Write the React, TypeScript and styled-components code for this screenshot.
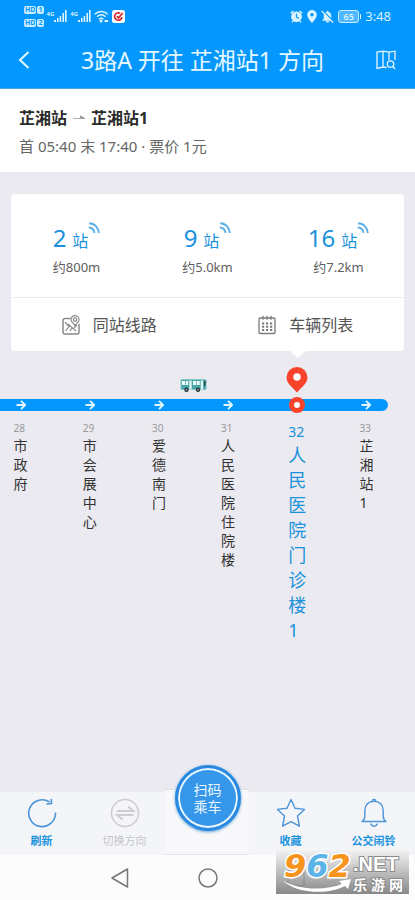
import React from "react";
import styled, { createGlobalStyle } from "styled-components";

const BLUE = "#0497fd";
const LINK = "#1a92dc";

const GlobalStyle = createGlobalStyle`
  *, *::before, *::after { box-sizing: border-box; }
  body {
    margin: 0;
    background: #ebeaf0;
    font-family: "Noto Sans", "Noto Sans CJK SC", sans-serif;
  }
  button {
    font: inherit;
    color: inherit;
    background: none;
    border: 0;
    padding: 0;
    cursor: pointer;
  }
  h1, h2, p, ol, ul { margin: 0; padding: 0; font-weight: 400; }
  ol, ul { list-style: none; }
  svg { display: block; flex: none; }
`;

const Page = styled.div`
  position: relative;
  min-height: 100vh;
  display: flex;
  flex-direction: column;
`;

/* ---------- status bar and title ---------- */

const StatusBar = styled.div`
  height: 32px;
  display: flex;
  align-items: center;
  justify-content: space-between;
  padding: 0 24px;
  background: ${BLUE};
  color: #d9f3ff;
`;

const StatusGroup = styled.div<{ $gap: number }>`
  display: flex;
  align-items: center;
  gap: ${(p) => p.$gap}px;
`;

const SimStack = styled.div`
  display: grid;
  gap: 5px;
`;

const SimRow = styled.div`
  display: flex;
  gap: 1px;
`;

const SimTag = styled.span`
  height: 8px;
  padding: 0 1px;
  border-radius: 2px;
  background: #c9edff;
  color: ${BLUE};
  font-size: 7px;
  line-height: 8px;
  font-weight: 700;
`;

const Signal = styled.div`
  display: flex;
  align-items: flex-start;
`;

const SignalText = styled.span`
  font-size: 6px;
  line-height: 8px;
  font-weight: 700;
`;

const Battery = styled.div`
  display: flex;
  align-items: center;
  gap: 1px;
  &::after {
    content: "";
    width: 1px;
    height: 5px;
    background: #d9f3ff;
  }
`;

const BatteryBody = styled.span`
  width: 21px;
  height: 13px;
  border: 1px solid #c9edff;
  border-radius: 3px;
  background: #4fb7ff;
  font-size: 9px;
  line-height: 11px;
  font-weight: 600;
  text-align: center;
`;

const Clock = styled.span`
  font-size: 13px;
  line-height: 16px;
`;

const Header = styled.header`
  height: 57px;
  display: grid;
  grid-template-columns: 48px 1fr 58px;
  align-items: center;
  background: ${BLUE};
  border-bottom: 1px solid #4a9fdc;
  color: #e6f7ff;
`;

const Title = styled.h1`
  font-size: 23px;
  line-height: 32px;
  text-align: center;
  white-space: nowrap;
`;

const IconButton = styled.button`
  height: 48px;
  display: flex;
  align-items: center;
  justify-content: center;
`;

/* ---------- route summary ---------- */

const Summary = styled.section`
  padding: 17px 19px 14px;
  background: #fff;
`;

const Route = styled.h2`
  display: flex;
  align-items: center;
  gap: 6px;
  font-size: 16px;
  line-height: 24px;
  font-weight: 700;
  color: #2b2b2b;
`;

const Schedule = styled.p`
  margin-top: 4px;
  font-size: 15px;
  line-height: 24px;
  color: #666;
`;

/* ---------- arrivals card ---------- */

const Main = styled.main`
  flex: 1;
  padding-top: 22px;
`;

const Card = styled.section`
  position: relative;
  margin: 0 11px;
  border-radius: 4px;
  background: #fff;
  &::after {
    content: "";
    position: absolute;
    top: 100%;
    right: 98px;
    border: 8px solid transparent;
    border-top: 7px solid #fff;
    border-bottom: 0;
  }
`;

const Arrivals = styled.div`
  display: grid;
  grid-template-columns: repeat(3, 1fr);
  padding: 28px 0 20px;
  border-bottom: 1px solid #ececf0;
`;

const Arrival = styled.div`
  display: grid;
  justify-items: center;
`;

const StopsAway = styled.div`
  display: flex;
  align-items: baseline;
  color: ${LINK};
  font-size: 16px;
  line-height: 32px;
  svg { align-self: flex-start; }
`;

const StopCount = styled.span`
  margin-right: 6px;
  font-size: 24px;
`;

const Distance = styled.span`
  font-size: 13px;
  line-height: 20px;
  color: #606060;
`;

const CardActions = styled.div`
  display: grid;
  grid-template-columns: repeat(2, 1fr);
`;

const CardAction = styled.button`
  height: 53px;
  display: flex;
  align-items: center;
  justify-content: center;
  gap: 13px;
  font-size: 16px;
  line-height: 24px;
  color: #555;
`;

/* ---------- line diagram ---------- */

const Line = styled.section`
  padding-top: 14px;
`;

const Markers = styled.div`
  display: grid;
  grid-template-columns: repeat(6, 1fr);
  margin: 0 14px 0 -14px;
  height: 34px;
  padding: 2px 0 6px;
  justify-items: center;
`;

const BusSlot = styled.div`
  grid-column: 3 / 5;
  align-self: end;
`;

const PinSlot = styled.div`
  grid-column: 5;
  align-self: start;
`;

const Track = styled.div`
  margin-right: 27px;
  height: 12px;
  border-radius: 0 6px 6px 0;
  background: ${BLUE};
`;

const TrackStops = styled.div`
  display: grid;
  grid-template-columns: repeat(6, 1fr);
  grid-template-rows: 12px;
  margin: 0 -13px 0 -14px;
  align-items: center;
  justify-items: center;
`;

const CurrentDot = styled.span`
  width: 16px;
  height: 16px;
  border: 5px solid #f9432a;
  border-radius: 50%;
  background: #fff;
`;

const StopList = styled.ol`
  display: grid;
  grid-template-columns: repeat(6, 1fr);
  margin: 10px 14px 0 -14px;
`;

const Stop = styled.li<{ $current?: boolean }>`
  width: ${(p) => (p.$current ? 18 : 14)}px;
  justify-self: center;
  color: ${(p) => (p.$current ? LINK : "#333")};
  font-size: ${(p) => (p.$current ? 18 : 14)}px;
  line-height: ${(p) => (p.$current ? 25 : 19)}px;
  word-break: break-all;
`;

const StopNumber = styled.span<{ $current?: boolean }>`
  display: block;
  font-size: ${(p) => (p.$current ? 14 : 10)}px;
  line-height: ${(p) => (p.$current ? 22 : 15)}px;
  color: ${(p) => (p.$current ? LINK : "#999")};
  word-break: normal;
`;

/* ---------- tab bar ---------- */

const TabBar = styled.nav`
  display: grid;
  grid-template-columns: repeat(5, 1fr);
  height: 63px;
  background: #f4f5f8;
`;

const Tab = styled.button<{ $disabled?: boolean }>`
  display: flex;
  flex-direction: column;
  align-items: center;
  padding-top: 6px;
  gap: 4px;
  font-size: 11px;
  line-height: 18px;
  font-weight: ${(p) => (p.$disabled ? 400 : 600)};
  color: ${(p) => (p.$disabled ? "#c6c6c9" : LINK)};
`;

const ScanCell = styled.div`
  display: flex;
  justify-content: center;
  align-items: flex-start;
  margin-top: -3px;
  background: #f8f8fa;
  border-top: 1px solid #dfdfe4;
  border-bottom: 1px solid #e4e4ea;
`;

const ScanButton = styled.button`
  width: 66px;
  height: 66px;
  flex: none;
  margin-top: -25px;
  border-radius: 50%;
  background: #3596ea;
  border: 3px solid #2b8adf;
  box-shadow: inset 0 0 0 2px #e9f7ff, 0 1px 3px #5b9fda;
  color: #e9f6ff;
  font-size: 14px;
  line-height: 17px;
`;

const SystemNav = styled.nav`
  height: 45px;
  display: grid;
  grid-template-columns: 1fr 88px 88px 88px 1fr;
  background: #fcfcfd;
`;

const SystemButton = styled.button<{ $column: number }>`
  grid-column: ${(p) => p.$column};
  display: flex;
  align-items: center;
  justify-content: center;
`;

/* ---------- site badge ---------- */

const SiteBadge = styled.div`
  position: absolute;
  right: 6px;
  bottom: 6px;
  width: 133px;
  height: 44px;
  display: flex;
  background: linear-gradient(rgba(240, 240, 240, 0.6), rgba(130, 130, 130, 0.95));
  color: #fff;
`;

const BadgeNumber = styled.div`
  position: relative;
  width: 77px;
  padding-left: 8px;
  font: italic 700 32px/32px "DejaVu Sans", sans-serif;
  -webkit-text-stroke: 3px #fff;
  paint-order: stroke fill;
  svg { position: absolute; left: 6px; bottom: 1px; }
`;

const Digit = styled.span<{ $color: string }>`
  position: relative;
  color: ${(p) => p.$color};
`;

const BadgeText = styled.div`
  padding-top: 3px;
  -webkit-text-stroke: 2px #8a8a8a;
  paint-order: stroke fill;
  white-space: nowrap;
`;

const BadgeDomain = styled.div`
  font: 700 20px/22px "Liberation Sans", sans-serif;
`;

const BadgeName = styled.div`
  font: 700 14px/19px "Noto Sans CJK SC", sans-serif;
  display: flex;
  gap: 4px;
`;

/* ---------- icons ---------- */

const SignalBars = () => (
  <svg width="13" height="13" viewBox="0 0 13 13" fill="#d9f3ff">
    <rect x="0" y="10" width="2" height="2" />
    <rect x="3" y="8" width="1.6" height="4" />
    <rect x="5.6" y="6" width="1.6" height="6" />
    <rect x="8.4" y="3" width="1.6" height="9" />
    <rect x="11" y="0" width="1.6" height="12" />
  </svg>
);

const WifiIcon = () => (
  <svg width="15" height="13" viewBox="0 0 15 13" fill="none" stroke="#d9f3ff" strokeWidth="1.5">
    <path d="M.8 4.3C4.5.4 10 .4 13.7 4.3M3 6.8c2.5-2.6 6-2.6 8.5 0M5 9.2c1.4-1.4 3.2-1.4 4.4 0" />
    <circle cx="7" cy="11" r=".8" fill="#d9f3ff" />
    <path d="M10.5 11H14" strokeWidth="2" />
  </svg>
);

const AppIcon = () => (
  <svg width="13" height="13" viewBox="0 0 13 13">
    <rect width="13" height="13" rx="2.5" fill="#fff" />
    <path d="M8.2 3.3a3.7 3.7 0 1 0 1.8 4M5 6.2l1.5 1.7L10.7 3" fill="none" stroke="#d92b2b" strokeWidth="1.7" />
  </svg>
);

const AlarmIcon = () => (
  <svg width="13" height="13" viewBox="0 0 13 13" stroke="#d9f3ff" fill="none">
    <circle cx="6.5" cy="6.8" r="4.9" fill="#d9f3ff" />
    <path d="M.8 3.5 3.3 1M12.2 3.5 9.7 1M3 11l-1 1.3M10 11l1 1.3" strokeWidth="1.6" />
    <path d="M6.5 3.8v3.4l2.3 1.2" stroke={BLUE} strokeWidth="1.2" />
  </svg>
);

const PlaceIcon = () => (
  <svg width="10" height="13" viewBox="0 0 10 13">
    <path d="M5 0a4.8 4.8 0 0 0-4.8 4.8C.2 8.2 5 13 5 13s4.8-4.8 4.8-8.2A4.8 4.8 0 0 0 5 0Z" fill="#d9f3ff" />
    <circle cx="5" cy="4.8" r="1.7" fill={BLUE} />
  </svg>
);

const MutedIcon = () => (
  <svg width="13" height="13" viewBox="0 0 13 13">
    <path d="M6.500.5v1C9 2 10 4 10 6v2.500l1.500 2H1.500l1.500-2V6c0-2 1-4 3.500-4.500M5 11.300h3c0 1.500-3 1.500-3 0" fill="#d9f3ff" stroke="#d9f3ff" strokeWidth=".5" />
    <path d="M1.500.5 13 12" stroke={BLUE} strokeWidth="1.400" />
    <path d="M.6 1 12 12.500" stroke="#d9f3ff" strokeWidth="1.200" />
  </svg>
);

const BackIcon = () => (
  <svg width="12" height="18" viewBox="0 0 12 18" fill="none" stroke="currentColor" strokeWidth="2">
    <path d="M10.500 1 2 9l8.500 8" />
  </svg>
);

const MapSearchIcon = () => (
  <svg width="20" height="20" viewBox="0 0 20 20" fill="none" stroke="currentColor" strokeWidth="1.300">
    <path d="M10.500 17.500 7 17l-6 1.500V2l6-.8 6 1 6-1V10M7 1.200V17M13 2.200V10" />
    <circle cx="14.500" cy="14" r="3.200" />
    <path d="m16.800 16.500 2.400 2.500" />
  </svg>
);

const RouteArrow = () => (
  <svg width="12" height="6" viewBox="0 0 12 6">
    <path d="M0 3.500h12L7.500.8v2.700" fill="#999" stroke="#999" strokeWidth=".8" />
  </svg>
);

const WaveIcon = () => (
  <svg width="12" height="12" viewBox="0 0 12 12" fill="none" stroke="#5aaee8" strokeWidth="1.900">
    <path d="M1.200 1.200C6.500 1.200 10.500 5.500 10.800 11M.8 5.500C3.800 5.500 6 7.800 6.500 10.800" />
  </svg>
);

const StationMapIcon = () => (
  <svg width="18" height="20" viewBox="0 0 18 20" fill="none" stroke="#8b8b8b" strokeWidth="1.200">
    <path d="M8.500 3.500H3a2 2 0 0 0-2 2V17a2 2 0 0 0 2 2h12a2 2 0 0 0 2-2V9" strokeWidth="1.500" />
    <path d="M13 10.500C10 7.500 9 6 9 4.600a4 4 0 0 1 8 0C17 6 16 7.500 13 10.500Z" />
    <circle cx="13" cy="4.600" r="1.700" />
    <path d="m3 7 4 4.500-3.500 4.500M6 9l8 7M8 16l2-3M12 13l3-3" />
  </svg>
);

const CalendarIcon = () => (
  <svg width="18" height="20" viewBox="0 0 18 20" fill="none" stroke="#7b7b7b" strokeWidth="1.300">
    <rect x="1" y="3" width="16" height="15.500" rx="1" />
    <path d="M5 .8v4M9 .8v4M13 .8v4" />
    <path d="M4 8.500h10.500M4 11.800h10.500M4 15h10.500" strokeWidth="2" strokeDasharray="2.200 1.800" />
  </svg>
);

const BusIcon = () => (
  <svg width="27" height="15" viewBox="0 0 27 15">
    <path d="M1.500 1.500h23q1.500 0 1.500 2v8H1v-9q0-1 .5-1Z" fill="#49a5a8" stroke="#82c4c6" />
    <path d="M2 3h3v4H2zM5.700 3h2.500v4H5.700zM13 3h3v4h-3zM16.700 3h3v4h-3z" fill="#f1ffff" />
    <path d="M9.300 2.500h2.400v9H9.300zM20.700 2.500h2.500v9h-2.500z" fill="#dff5f4" />
    <path d="M24 3h1.500v5H24zM26 2v3" fill="#173c44" stroke="#407c83" strokeWidth=".6" />
    <circle cx="6.500" cy="11.700" r="2.200" fill="#26343a" />
    <circle cx="18" cy="11.700" r="2.200" fill="#26343a" />
    <circle cx="6.500" cy="11.700" r=".8" fill="#c6d3d5" />
    <circle cx="18" cy="11.700" r=".8" fill="#c6d3d5" />
  </svg>
);

const PinIcon = () => (
  <svg width="22" height="26" viewBox="0 0 22 26">
    <path d="M11 0A10.500 10.500 0 0 0 .5 10.500C.5 16 6 20 11 25.500 16 20 21.500 16 21.500 10.500A10.500 10.500 0 0 0 11 0Z" fill="#f9432a" />
    <circle cx="11" cy="10" r="3.700" fill="#fff" />
  </svg>
);

const TrackArrow = () => (
  <svg width="10" height="10" viewBox="0 0 10 10" fill="none" stroke="#e3f6ff" strokeWidth="1.800">
    <path d="M.5 5H9M5 .8 9.200 5 5 9.200" />
  </svg>
);

const RefreshIcon = () => (
  <svg width="30" height="30" viewBox="0 0 30 30" fill="none" stroke="#4b94d8" strokeWidth="1.600">
    <path d="M28.500 14.500A13.400 13.400 0 1 1 22.500 4" />
    <path d="m24.300 1 .2 4.600-5 .4" />
  </svg>
);

const SwapIcon = () => (
  <svg width="30" height="30" viewBox="0 0 30 30" fill="none" stroke="#cdcdcf" strokeWidth="1.500">
    <circle cx="15" cy="15" r="13.500" />
    <path d="M7 13h16.500L18 8.500M23.500 17H7l5.500 4.500" strokeWidth="1.800" />
  </svg>
);

const StarIcon = () => (
  <svg width="30" height="30" viewBox="0 0 30 30" fill="none" stroke="#4b94d8" strokeWidth="1.400" strokeLinejoin="round">
    <path d="m15 1.500 4 8.700 9.500 1.200-7 6.600 1.900 10.200L15 23.600l-8.400 4.600L8.500 18l-7-6.600L11 10.200Z" />
  </svg>
);

const BellIcon = () => (
  <svg width="30" height="30" viewBox="0 0 30 30" fill="none" stroke="#4b94d8" strokeWidth="1.400" strokeLinejoin="round">
    <path d="M3 23.500c2.300-1.500 2.800-3 2.800-5.500v-5.500C5.800 7 9.500 3.300 15 3.300S24.200 7 24.200 12.500V18c0 2.500.5 4 2.800 5.500Z" />
    <path d="M13.500 3.300v-1c0-1.300 3-1.300 3 0v1M11.800 25.500c.5 3.600 5.900 3.600 6.400 0" />
  </svg>
);

/* ---------- data ---------- */

const arrivals = [
  { stops: 2, distance: "约800m" },
  { stops: 9, distance: "约5.0km" },
  { stops: 16, distance: "约7.2km" },
];

const stops = [
  { number: 28, name: "市政府" },
  { number: 29, name: "市会展中心" },
  { number: 30, name: "爱德南门" },
  { number: 31, name: "人民医院住院楼" },
  { number: 32, name: "人民医院门诊楼1", current: true },
  { number: 33, name: "芷湘站1" },
];

export default function App() {
  return (
    <>
      <GlobalStyle />
      <Page>
        <StatusBar>
          <StatusGroup $gap={3}>
            <SimStack>
              {[1, 2].map((sim) => (
                <SimRow key={sim}>
                  <SimTag>HD</SimTag>
                  <SimTag>{sim}</SimTag>
                </SimRow>
              ))}
            </SimStack>
            <Signal><SignalText>4G</SignalText><SignalBars /></Signal>
            <Signal><SignalText>4G</SignalText><SignalBars /></Signal>
            <WifiIcon />
            <AppIcon />
          </StatusGroup>
          <StatusGroup $gap={4}>
            <AlarmIcon />
            <PlaceIcon />
            <MutedIcon />
            <Battery><BatteryBody>65</BatteryBody></Battery>
            <Clock>3:48</Clock>
          </StatusGroup>
        </StatusBar>
        <Header>
          <IconButton aria-label="返回"><BackIcon /></IconButton>
          <Title>3路A 开往 芷湘站1 方向</Title>
          <IconButton aria-label="地图"><MapSearchIcon /></IconButton>
        </Header>
        <Summary>
          <Route>芷湘站<RouteArrow />芷湘站1</Route>
          <Schedule>首 05:40 末 17:40 · 票价 1元</Schedule>
        </Summary>
        <Main>
          <Card>
            <Arrivals>
              {arrivals.map((a) => (
                <Arrival key={a.stops}>
                  <StopsAway>
                    <StopCount>{a.stops}</StopCount>站<WaveIcon />
                  </StopsAway>
                  <Distance>{a.distance}</Distance>
                </Arrival>
              ))}
            </Arrivals>
            <CardActions>
              <CardAction><StationMapIcon />同站线路</CardAction>
              <CardAction><CalendarIcon />车辆列表</CardAction>
            </CardActions>
          </Card>
          <Line>
            <Markers>
              <BusSlot><BusIcon /></BusSlot>
              <PinSlot><PinIcon /></PinSlot>
            </Markers>
            <Track>
              <TrackStops>
                {stops.map((s) => (s.current ? <CurrentDot key={s.number} /> : <TrackArrow key={s.number} />))}
              </TrackStops>
            </Track>
            <StopList>
              {stops.map((s) => (
                <Stop key={s.number} $current={s.current}>
                  <StopNumber $current={s.current}>{s.number}</StopNumber>
                  {s.name}
                </Stop>
              ))}
            </StopList>
          </Line>
        </Main>
        <TabBar>
          <Tab><RefreshIcon />刷新</Tab>
          <Tab $disabled disabled><SwapIcon />切换方向</Tab>
          <ScanCell><ScanButton>扫码<br />乘车</ScanButton></ScanCell>
          <Tab><StarIcon />收藏</Tab>
          <Tab><BellIcon />公交闹铃</Tab>
        </TabBar>
        <SystemNav>
          <SystemButton $column={2} aria-label="后退">
            <svg width="18" height="20" viewBox="0 0 18 20" fill="none" stroke="#777" strokeWidth="1.500" strokeLinejoin="round">
              <path d="M16.500 1v18L1 10Z" />
            </svg>
          </SystemButton>
          <SystemButton $column={3} aria-label="主页">
            <svg width="20" height="20" viewBox="0 0 20 20" fill="none" stroke="#777" strokeWidth="1.500">
              <circle cx="10" cy="10" r="9" />
            </svg>
          </SystemButton>
          <SystemButton $column={4} aria-label="最近任务">
            <svg width="18" height="18" viewBox="0 0 18 18" fill="none" stroke="#777" strokeWidth="1.500">
              <rect x="1" y="1" width="16" height="16" rx="1" />
            </svg>
          </SystemButton>
        </SystemNav>
        <SiteBadge>
          <BadgeNumber>
            <svg width="70" height="14" viewBox="0 0 70 14">
              <path d="M0 1C15 11 43 12 60 5L57 2l12-2-3 10-3-3C46 16 14 15 0 1Z" fill="#fff" stroke="#999" strokeWidth=".5" />
            </svg>
            <Digit $color="#f7941d">9</Digit>
            <Digit $color="#5ab4e8">6</Digit>
            <Digit $color="#f7941d">2</Digit>
          </BadgeNumber>
          <BadgeText>
            <BadgeDomain>.NET</BadgeDomain>
            <BadgeName><span>乐</span><span>游</span><span>网</span></BadgeName>
          </BadgeText>
        </SiteBadge>
      </Page>
    </>
  );
}
